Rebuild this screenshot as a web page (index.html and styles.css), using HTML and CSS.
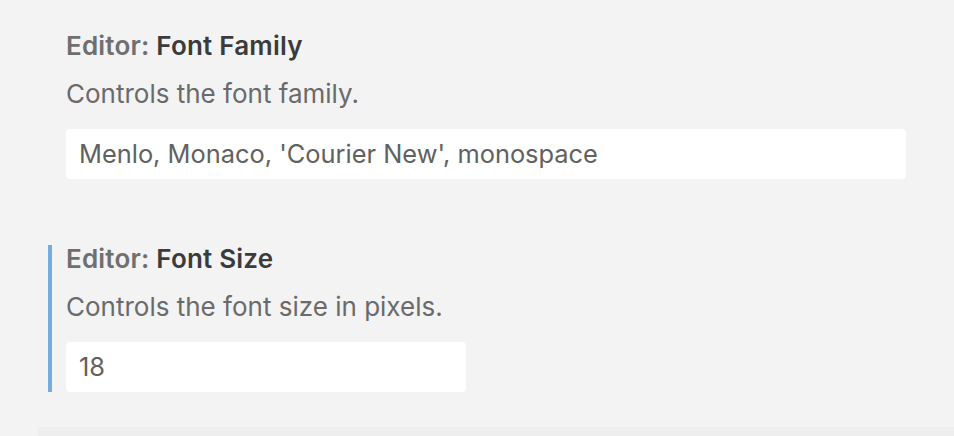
FILE: index.html
```html
<!DOCTYPE html>
<html lang="en">
<head>
<meta charset="utf-8">
<title>Settings</title>
<link rel="stylesheet" href="styles.css">
</head>
<body>
<div class="settings">
  <div class="setting">
    <div class="title"><span class="cat">Editor: </span><span class="label">Font Family</span></div>
    <div class="desc">Controls the font family.</div>
    <div class="input wide">Menlo, Monaco, 'Courier New', monospace</div>
  </div>
  <div class="setting focused">
    <div class="title"><span class="cat">Editor: </span><span class="label">Font Size</span></div>
    <div class="desc">Controls the font size in pixels.</div>
    <div class="input narrow">18</div>
  </div>
</div>
<div class="footer-band"></div>
</body>
</html>
```
FILE: styles.css
```css
html, body {
  margin: 0;
  padding: 0;
  background: #f3f3f3;
  height: 100%;
  overflow: hidden;
}
body {
  font-family: Inter, "Noto Sans", sans-serif;
  font-size: 26px;
  color: #616161;
  display: flex;
  flex-direction: column;
}
.settings {
  display: flex;
  flex-direction: column;
  gap: 66px;
  padding: 32px 0 0 48px;
}
.setting {
  border-left: 4px solid transparent;
  padding: 2px 0 0 14px;
}
.setting.focused {
  border-left-color: #75acdc;
}
.title {
  line-height: 24px;
  font-weight: 600;
  letter-spacing: 0.2px;
}
.cat {
  color: #6f6f6f;
}
.label {
  color: #3b3b3b;
}
.desc {
  line-height: 24px;
  margin-top: 24px;
  color: #6a6a6a;
}
.input {
  margin-top: 23px;
  height: 50px;
  box-sizing: border-box;
  background: #ffffff;
  border-radius: 4px;
  padding: 0 13px;
  line-height: 50px;
  font-size: 25.4px;
  color: #616161;
}
.wide { width: 840px; }
.narrow { width: 400px; }
.footer-band {
  margin: auto 0 0 38px;
  height: 9px;
  background: #eeeeee;
}
```
